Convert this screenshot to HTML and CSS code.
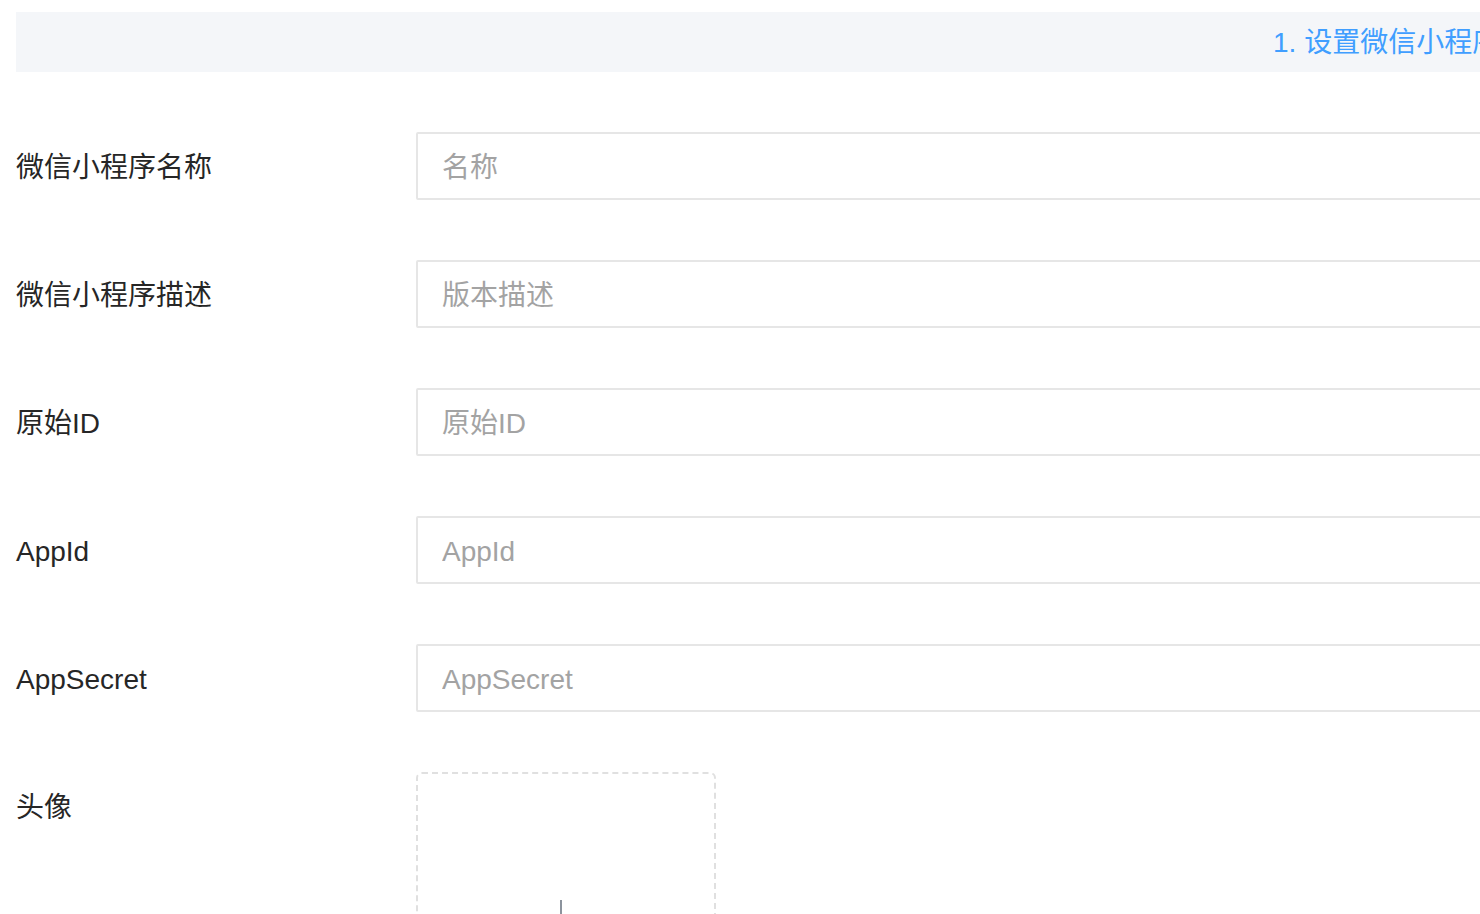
FILE: index.html
```html
<!DOCTYPE html>
<html lang="zh-CN">
<head>
<meta charset="utf-8">
<title>设置微信小程序</title>
<link rel="stylesheet" href="styles.css">
</head>
<body>
<div class="page">
  <div class="step-bar"><span class="step-title">1. 设置微信小程序信息</span></div>
  <form class="form">
    <div class="form-item">
      <label class="form-label">微信小程序名称</label>
      <div class="form-content"><input class="input" type="text" placeholder="名称"></div>
    </div>
    <div class="form-item">
      <label class="form-label">微信小程序描述</label>
      <div class="form-content"><input class="input" type="text" placeholder="版本描述"></div>
    </div>
    <div class="form-item">
      <label class="form-label">原始ID</label>
      <div class="form-content"><input class="input" type="text" placeholder="原始ID"></div>
    </div>
    <div class="form-item">
      <label class="form-label">AppId</label>
      <div class="form-content"><input class="input" type="text" placeholder="AppId"></div>
    </div>
    <div class="form-item">
      <label class="form-label">AppSecret</label>
      <div class="form-content"><input class="input" type="text" placeholder="AppSecret"></div>
    </div>
    <div class="form-item">
      <label class="form-label">头像</label>
      <div class="form-content">
        <div class="uploader">
          <svg class="plus" width="56" height="56" viewBox="0 0 56 56" aria-hidden="true">
            <path d="M28 0 V56 M0 28 H56" stroke="#8c939d" stroke-width="2" fill="none"/>
          </svg>
        </div>
      </div>
    </div>
  </form>
</div>
</body>
</html>
```

FILE: styles.css
```css
html, body {
  margin: 0;
  padding: 0;
  overflow: hidden;
  background: #ffffff;
}

body {
  font-family: "Liberation Sans", "Noto Sans CJK SC", sans-serif;
  color: #303133;
}

.page {
  padding: 12px 0 0 16px;
  width: 2400px;
}

.step-bar {
  height: 60px;
  background: #f4f6f9;
  display: flex;
  align-items: center;
  padding-left: 1257px;
  padding-bottom: 4px;
  box-sizing: border-box;
}

.step-title {
  font-size: 28px;
  color: #409eff;
  white-space: nowrap;
}

.form {
  margin-top: 60px;
  display: flex;
  flex-direction: column;
  gap: 60px;
}

.form-item {
  display: flex;
  align-items: flex-start;
}

.form-label {
  width: 400px;
  flex: none;
  height: 68px;
  line-height: 68px;
  padding-top: 2px;
  box-sizing: border-box;
  font-size: 28px;
  color: #262626;
}

.form-content {
  flex: 1;
}

.input {
  display: block;
  width: 1600px;
  height: 68px;
  box-sizing: border-box;
  border: 2px solid #e6e6e6;
  border-radius: 2px;
  padding: 4px 24px 0;
  font-family: "Liberation Sans", "Noto Sans CJK SC", sans-serif;
  font-size: 28px;
  color: #303133;
  background: #fff;
  outline: none;
}

.input::placeholder {
  color: #a3a3a3;
}

.uploader {
  width: 300px;
  height: 300px;
  box-sizing: border-box;
  border: 2px dashed #e0e0e0;
  border-radius: 6px;
  position: relative;
}

.plus {
  position: absolute;
  left: 115px;
  top: 126px;
}
```
